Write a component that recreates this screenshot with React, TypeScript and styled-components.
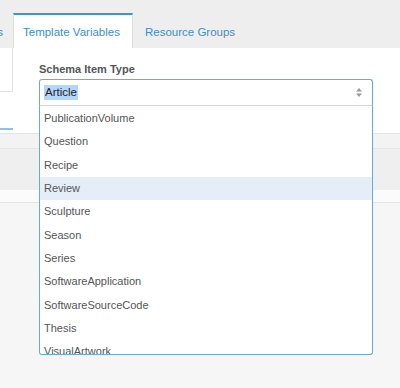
import React from "react";
import styled, {createGlobalStyle} from "styled-components";

const GlobalStyle = createGlobalStyle`
    html, body {
        margin: 0;
        padding: 0;
        background: #f6f6f6;
    }
    * {
        box-sizing: border-box;
    }
`;

const Page = styled.div`
    width: 400px;
    height: 388px;
    overflow: hidden;
    background-color: #f6f6f6;
    font-family: "Liberation Sans", Helvetica, Arial, sans-serif;
`;

const TabBar = styled.div`
    display: flex;
    align-items: flex-end;
    height: 48px;
    background-color: #eeeeee;
`;

const PrevTab = styled.div`
    display: flex;
    justify-content: flex-end;
    align-items: center;
    width: 13px;
    height: 33px;
    padding-right: 10px;
    overflow: hidden;
    white-space: nowrap;
    font-size: 11.5px;
    color: #3c8dc9;
    span {
        flex-shrink: 0;
    }
`;

const Tab = styled.div<{$active?: boolean}>`
    display: flex;
    align-items: center;
    height: ${(props) => (props.$active ? "35px" : "33px")};
    padding: ${(props) => (props.$active ? "1px 9px 0" : "0 12px")};
    font-size: 11.5px;
    color: #3c8dc9;
    white-space: nowrap;
    background-color: ${(props) => (props.$active ? "#fff" : "transparent")};
    border-top: ${(props) => (props.$active ? "2px solid #3a95d3" : "none")};
    border-left: ${(props) => (props.$active ? "1px solid #dedede" : "none")};
    border-right: ${(props) => (props.$active ? "1px solid #dedede" : "none")};
    width: ${(props) => (props.$active ? "120px" : "auto")};
`;

const Body = styled.div`
    display: flex;
    height: 85px;
    background-color: #fff;
`;

const SideCol = styled.div`
    display: flex;
    flex-direction: column;
    width: 13px;
    flex-shrink: 0;
`;

const SideBox = styled.div`
    height: 44px;
    border-right: 1px solid #e2e2e2;
    border-bottom: 1px solid #e2e2e2;
    background-color: #fff;
`;

const SideUnderline = styled.div`
    margin-top: 36px;
    height: 1.5px;
    background-color: #8fc1e7;
`;

const FieldCol = styled.div`
    display: flex;
    flex-direction: column;
    width: 334px;
    margin-left: 26px;
    padding-top: 14px;
`;

const Label = styled.label`
    font-size: 11px;
    font-weight: bold;
    line-height: 14px;
    color: #555;
    margin-bottom: 3px;
`;

const SelectWrap = styled.div`
    position: relative;
    z-index: 2;
`;

const SelectBox = styled.div`
    display: flex;
    align-items: center;
    justify-content: space-between;
    height: 27px;
    padding: 0 10px 0 4px;
    border: 1px solid #6aa9db;
    border-bottom-color: #cfd6dc;
    border-radius: 3px 3px 0 0;
    background-color: #fff;
`;

const Selected = styled.span`
    font-size: 11.5px;
    line-height: 15px;
    color: #222;
    background-color: #b4d5fd;
    padding: 0 1px;
`;

const Dropdown = styled.ul`
    position: absolute;
    top: 100%;
    left: 0;
    right: 0;
    height: 249px;
    margin: 0;
    padding: 1px 0 0;
    list-style: none;
    overflow: hidden;
    background-color: #fff;
    border: 1px solid #6aa9db;
    border-top: none;
    border-radius: 0 0 3px 3px;
`;

const Option = styled.li<{$hover?: boolean}>`
    height: 23.33px;
    line-height: 23.33px;
    padding-left: 4px;
    font-size: 11px;
    color: #555;
    white-space: nowrap;
    background-color: ${(props) => (props.$hover ? "#e5eef8" : "transparent")};
`;

const Lower = styled.div`
    display: flex;
    flex-direction: column;
`;

const GridHead = styled.div`
    height: 16px;
    background-color: #f3f3f3;
    border-top: 1px solid #e3e3e3;
    border-bottom: 1px solid #e6e6e6;
`;

const GridBand = styled.div`
    height: 41px;
    background-color: #efefef;
`;

const GridFoot = styled.div`
    height: 13px;
    background-color: #fbfbfb;
    border-bottom: 1px solid #e4e4e4;
`;

const options = [
    "PublicationVolume",
    "Question",
    "Recipe",
    "Review",
    "Sculpture",
    "Season",
    "Series",
    "SoftwareApplication",
    "SoftwareSourceCode",
    "Thesis",
    "VisualArtwork",
];

const sortArrows = (
    <svg width="6" height="9" viewBox="0 0 6 9">
        <polygon points="0,3.5 3,0 6,3.5" fill="#9a9a9a" />
        <polygon points="0,5.5 3,9 6,5.5" fill="#9a9a9a" />
    </svg>
);

export default function App() {
    return (
        <Page>
            <GlobalStyle />
            <TabBar>
                <PrevTab>
                    <span>Page Settings</span>
                </PrevTab>
                <Tab $active>Template Variables</Tab>
                <Tab>Resource Groups</Tab>
            </TabBar>
            <Body>
                <SideCol>
                    <SideBox />
                    <SideUnderline />
                </SideCol>
                <FieldCol>
                    <Label>Schema Item Type</Label>
                    <SelectWrap>
                        <SelectBox>
                            <Selected>Article</Selected>
                            {sortArrows}
                        </SelectBox>
                        <Dropdown>
                            {options.map((o) => (
                                <Option key={o} $hover={o === "Review"}>
                                    {o}
                                </Option>
                            ))}
                        </Dropdown>
                    </SelectWrap>
                </FieldCol>
            </Body>
            <Lower>
                <GridHead />
                <GridBand />
                <GridFoot />
            </Lower>
        </Page>
    );
}
